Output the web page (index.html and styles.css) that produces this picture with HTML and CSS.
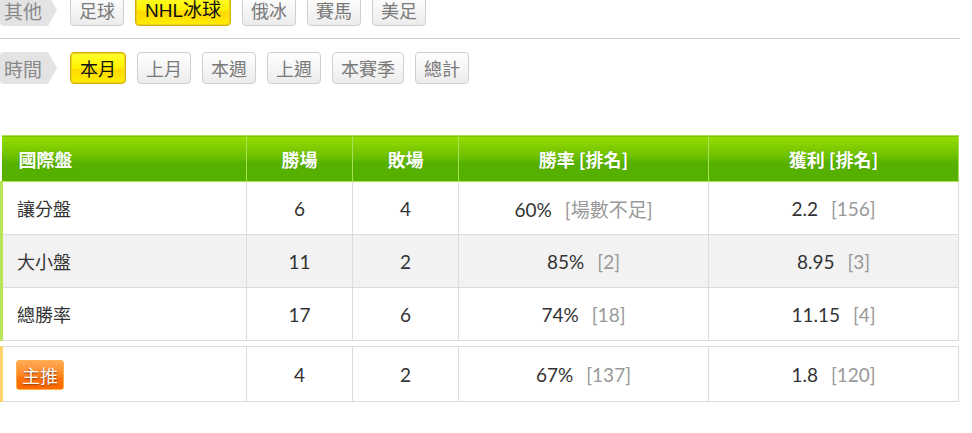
FILE: index.html
```html
<!DOCTYPE html>
<html lang="zh-Hant">
<head>
<meta charset="utf-8">
<link rel="stylesheet" href="styles.css">
</head>
<body>
<div class="page">
  <div class="filter filter-top">
    <span class="tag">其他</span>
    <div class="btns">
      <span class="btn">足球</span>
      <span class="btn active">NHL冰球</span>
      <span class="btn">俄冰</span>
      <span class="btn">賽馬</span>
      <span class="btn">美足</span>
    </div>
  </div>
  <div class="divider"></div>
  <div class="filter">
    <span class="tag">時間</span>
    <div class="btns">
      <span class="btn active">本月</span>
      <span class="btn">上月</span>
      <span class="btn">本週</span>
      <span class="btn">上週</span>
      <span class="btn">本賽季</span>
      <span class="btn">總計</span>
    </div>
  </div>

  <table class="stats">
    <colgroup><col class="c1"><col class="c2"><col class="c3"><col class="c4"><col class="c5"></colgroup>
    <thead>
      <tr><th class="first">國際盤</th><th>勝場</th><th>敗場</th><th>勝率 [排名]</th><th>獲利 [排名]</th></tr>
    </thead>
    <tbody>
      <tr><td class="first">讓分盤</td><td>6</td><td>4</td><td>60%<span class="rk">[場數不足]</span></td><td>2.2<span class="rk">[156]</span></td></tr>
      <tr class="alt"><td class="first">大小盤</td><td>11</td><td>2</td><td>85%<span class="rk">[2]</span></td><td>8.95<span class="rk">[3]</span></td></tr>
      <tr><td class="first">總勝率</td><td>17</td><td>6</td><td>74%<span class="rk">[18]</span></td><td>11.15<span class="rk">[4]</span></td></tr>
    </tbody>
  </table>
  <table class="stats stats-main">
    <colgroup><col class="c1"><col class="c2"><col class="c3"><col class="c4"><col class="c5"></colgroup>
    <tbody>
      <tr><td class="first"><span class="badge">主推</span></td><td>4</td><td>2</td><td>67%<span class="rk">[137]</span></td><td>1.8<span class="rk">[120]</span></td></tr>
    </tbody>
  </table>
</div>
</body>
</html>
```
FILE: styles.css
```css
html, body {
  margin: 0;
  padding: 0;
  background: #fff;
}
body {
  font-family: "Lato", "Noto Sans CJK TC", sans-serif;
  color: #333;
}
.page {
  width: 960px;
}
.filter {
  display: flex;
  align-items: center;
  gap: 13px;
  height: 32px;
}
.filter-top {
  margin-top: -6px;
}
.tag {
  position: relative;
  display: flex;
  align-items: center;
  height: 32px;
  width: 44px;
  padding-left: 4px;
  background: #e3e3e3;
  border-radius: 4px 0 0 4px;
  color: #888;
  font-family: "Noto Sans CJK TC", sans-serif;
  font-size: 19px;
  margin-right: 9px;
  white-space: nowrap;
}
.tag::after {
  content: "";
  position: absolute;
  right: -9px;
  top: 0;
  border-left: 9px solid #e3e3e3;
  border-top: 16px solid transparent;
  border-bottom: 16px solid transparent;
}
.btns {
  display: flex;
  gap: 11px;
}
.btn {
  display: flex;
  align-items: center;
  height: 30px;
  padding: 0 8px;
  border: 1px solid #cfcfcf;
  border-radius: 4px;
  background: linear-gradient(#ffffff, #ececec);
  color: #7a7a7a;
  font-family: "Noto Sans CJK TC", sans-serif;
  font-size: 18px;
  line-height: 1;
  white-space: nowrap;
}
.btn.active {
  border: 1px solid #d6b000;
  background: linear-gradient(#ffff30 0%, #fff200 50%, #ffd800 56%, #ffee00 100%);
  color: #111;
  padding: 0 9px;
  box-shadow: 0 0 0 1px #ecd020 inset;
}
.filter-top .btn.active {
  font-family: "Liberation Sans", "Noto Sans CJK TC", sans-serif;
  font-size: 19px;
  padding: 0 9px;
}
.divider {
  height: 1px;
  background: #d0d0d0;
  margin: 12px 0 13px 0;
}

.stats {
  width: 957px;
  border-collapse: collapse;
  table-layout: fixed;
}
.stats:first-of-type { margin-top: 51px; }
.c1 { width: 245px; }
.c2 { width: 106px; }
.c3 { width: 106px; }
.c4 { width: 250px; }
.c5 { width: 250px; }
.stats th {
  height: 45px;
  padding: 0;
  background: linear-gradient(#96dc00 0%, #6cc000 45%, #56b000 60%, #55b000 100%);
  color: #fff;
  font-family: "Noto Sans CJK TC", sans-serif;
  font-weight: bold;
  font-size: 18px;
  text-align: center;
  border: 1px solid #a7e255;
  text-shadow: 0 0 1px rgba(0,80,0,0.3);
}
.stats th.first {
  text-align: left;
  padding-left: 17px;
  border-left: none;
}
.stats td {
  height: 52px;
  padding: 0;
  text-align: center;
  font-size: 19px;
  color: #333;
  border: 1px solid #dcdcdc;
}
.stats td.first {
  text-align: left;
  padding-left: 14px;
  font-family: "Noto Sans CJK TC", sans-serif;
  font-size: 18px;
  border-left: 3px solid #b6e655;
}
.stats tr.alt td { background: #f2f2f2; }
.rk {
  color: #999;
  margin-left: 13px;
}
.stats-main {
  margin-top: 5px;
}
.stats-main td { height: 54px; }
.stats-main td.first { border-left-color: #ffd46e; padding-left: 13px; }
.badge {
  display: inline-flex;
  align-items: center;
  justify-content: center;
  width: 46px;
  height: 28px;
  border: 1px solid #ffb04a;
  border-radius: 3px;
  background: linear-gradient(#ffaa55 0%, #ff8a2a 45%, #ff7410 60%, #ff6a00 100%);
  color: #fff;
  font-size: 18px;
  text-shadow: 0 1px 2px rgba(120,40,0,0.9);
  vertical-align: middle;
}
```
